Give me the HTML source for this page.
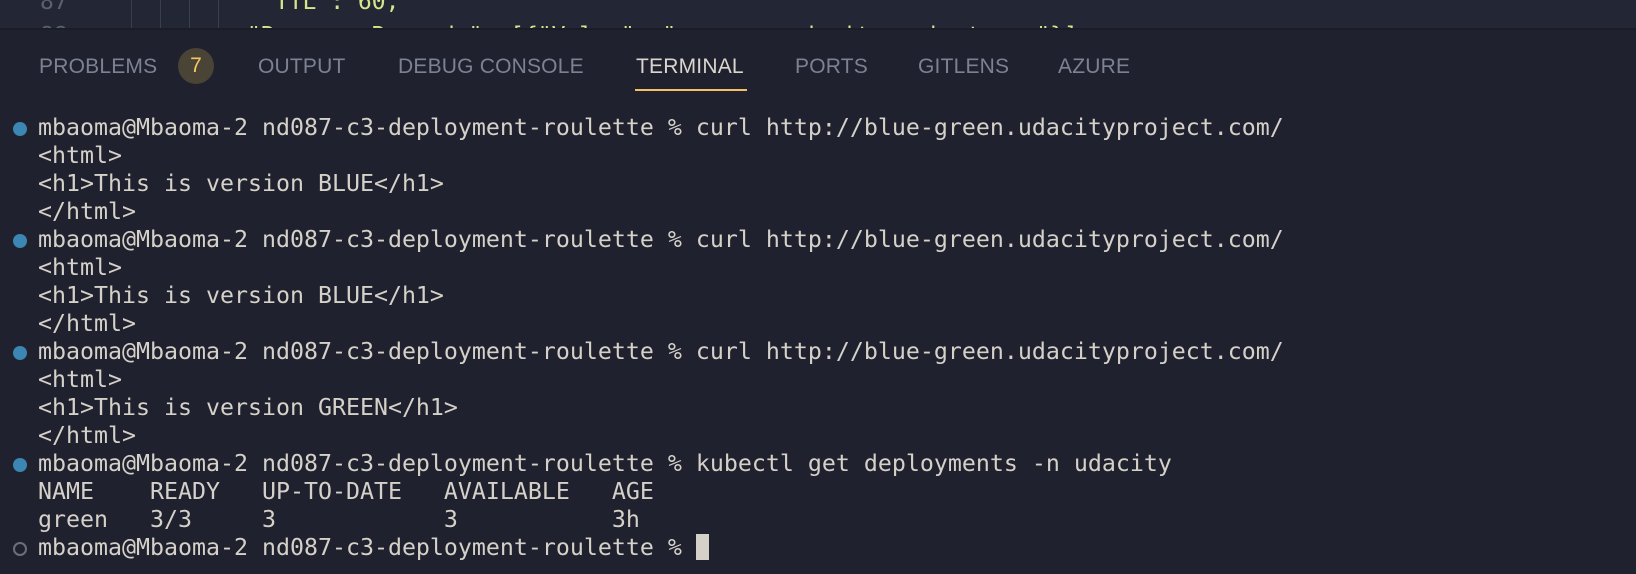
<!DOCTYPE html>
<html><head><meta charset="utf-8"><style>
html,body{margin:0;padding:0;width:1636px;height:574px;overflow:hidden;background:#1f222e;}
.ed{position:absolute;left:0;top:0;width:1636px;height:28px;background:#232735;overflow:hidden;border-bottom:2px solid #1a1d27;}
.g{position:absolute;top:0;height:28px;width:1px;background:#3a3f4e;}
.ed .t{position:absolute;font-family:"DejaVu Sans Mono",monospace;font-size:23px;color:#d6e68a;white-space:pre;line-height:28px;}
.ln{position:absolute;font-family:"DejaVu Sans Mono",monospace;font-size:23px;color:#5b6070;line-height:28px;}
.tab{position:absolute;top:54px;font-family:"Liberation Sans",sans-serif;font-size:21px;color:#7c8193;letter-spacing:0.2px;line-height:26px;}
.tab.a{color:#d9d6cf;}
.ul{position:absolute;left:635px;top:89px;width:112px;height:2px;background:#f2c166;}
.badge{position:absolute;left:178px;top:48px;width:36px;height:36px;border-radius:50%;background:#4a4436;color:#f5c862;font-family:"Liberation Sans",sans-serif;font-size:21px;text-align:center;line-height:36px;}
.term{position:absolute;left:38px;top:114px;font-family:"DejaVu Sans Mono",monospace;font-size:23.25px;line-height:28px;color:#d5d1c9;white-space:pre;}
.dot{position:absolute;left:13px;width:14px;height:14px;border-radius:50%;background:#3b86b3;}
.odot{position:absolute;left:13px;width:10px;height:10px;border-radius:50%;border:2px solid #6b6f7c;}
.cur{display:inline-block;width:13px;height:26px;background:#d5d1c9;vertical-align:-5px;}
</style></head><body>
<div class="ed">
<div class="ln" style="left:40px;top:-12px">87</div>
<div class="ln" style="left:40px;top:22px">88</div>
<div class="g" style="left:131px"></div><div class="g" style="left:160px"></div><div class="g" style="left:189px"></div><div class="g" style="left:218px"></div>
<div class="t" style="left:261px;top:-12px">"TTL": 60,</div>
<div class="t" style="left:247px;top:22px">"ResourceRecords": [{"Value": "a-green.udacityproject.com"}]</div>
</div>
<div class="tab" style="left:39px">PROBLEMS</div>
<div class="badge">7</div>
<div class="tab" style="left:258px">OUTPUT</div>
<div class="tab" style="left:398px">DEBUG CONSOLE</div>
<div class="tab a" style="left:636px">TERMINAL</div>
<div class="tab" style="left:795px">PORTS</div>
<div class="tab" style="left:918px">GITLENS</div>
<div class="tab" style="left:1058px">AZURE</div>
<div class="ul"></div>
<div class="dot" style="top:122px"></div>
<div class="dot" style="top:234px"></div>
<div class="dot" style="top:346px"></div>
<div class="dot" style="top:458px"></div>
<div class="odot" style="top:542px"></div>
<div class="term">mbaoma@Mbaoma-2 nd087-c3-deployment-roulette % curl http://blue-green.udacityproject.com/
&lt;html&gt;
&lt;h1&gt;This is version BLUE&lt;/h1&gt;
&lt;/html&gt;
mbaoma@Mbaoma-2 nd087-c3-deployment-roulette % curl http://blue-green.udacityproject.com/
&lt;html&gt;
&lt;h1&gt;This is version BLUE&lt;/h1&gt;
&lt;/html&gt;
mbaoma@Mbaoma-2 nd087-c3-deployment-roulette % curl http://blue-green.udacityproject.com/
&lt;html&gt;
&lt;h1&gt;This is version GREEN&lt;/h1&gt;
&lt;/html&gt;
mbaoma@Mbaoma-2 nd087-c3-deployment-roulette % kubectl get deployments -n udacity
NAME    READY   UP-TO-DATE   AVAILABLE   AGE
green   3/3     3            3           3h
mbaoma@Mbaoma-2 nd087-c3-deployment-roulette % <span class="cur"></span></div>
</body></html>
